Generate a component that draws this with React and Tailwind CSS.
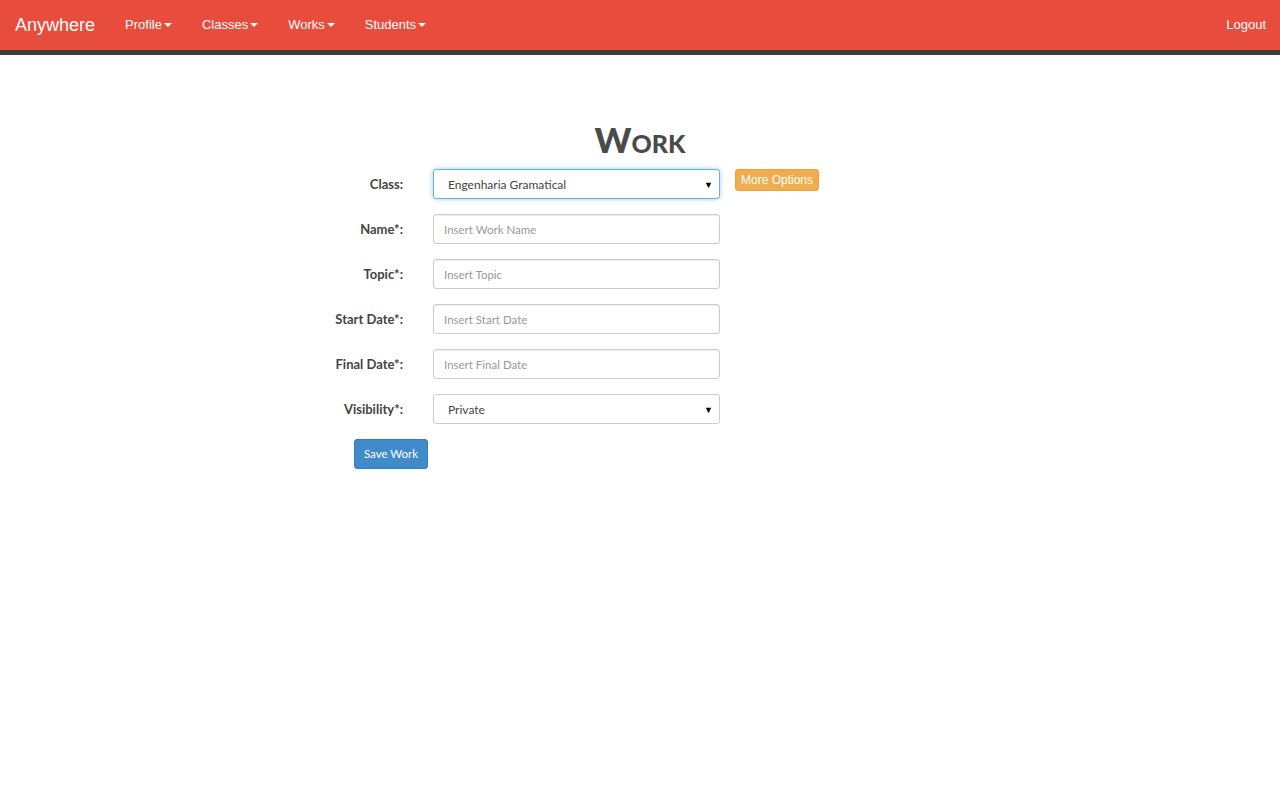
import React from 'react';

const navItems = ['Profile', 'Classes', 'Works', 'Students'];

const Caret = () => (
  <span className="ml-[2px] inline-block h-0 w-0 border-x-[4px] border-t-[4px] border-x-transparent border-t-white align-middle" />
);

const Navbar = () => (
  <div className="border-b-[5px] border-[#3d3d3d] bg-[#e74c3c] font-['Liberation_Sans',Arial,sans-serif] text-white">
    <div className="flex h-[50px] items-center">
      <a className="px-[15px] text-[18px]">Anywhere</a>
      <div className="flex">
        {navItems.map((item) => (
          <a key={item} className="flex items-center px-[15px] text-[13px]">
            {item}
            <Caret />
          </a>
        ))}
      </div>
      <a className="ml-auto pl-[15px] pr-[14px] text-[13px]">Logout</a>
    </div>
  </div>
);

const SelectBox = ({ value, focused }) => (
  <div
    className={
      'flex h-[30px] w-[287px] items-center justify-between rounded-[3px] border bg-white pl-[14px] pr-[6px] pt-[1px] text-[12px] text-[#444] ' +
      (focused ? 'border-[#66afe9] shadow-[0_0_5px_rgba(102,175,233,0.6)]' : 'border-[#ccc]')
    }
  >
    <span>{value}</span>
    <span className="text-[9px] text-black">▼</span>
  </div>
);

const TextBox = ({ placeholder }) => (
  <input
    placeholder={placeholder}
    className="h-[30px] w-[287px] rounded-[3px] border border-[#ccc] bg-white px-[10px] text-[11.5px] text-[#555] placeholder:text-[#999] shadow-[inset_0_1px_1px_rgba(0,0,0,0.075)] outline-none"
  />
);

const Row = ({ label, children }) => (
  <div className="flex items-center">
    <label className="w-[233px] pt-[1px] text-right text-[13px] font-bold text-[#444]">{label}</label>
    <div className="ml-[30px] flex items-start gap-[15px]">{children}</div>
  </div>
);

const App = () => (
  <div className="min-h-screen bg-white">
    <Navbar />
    <div className="font-['Lato','Open_Sans',sans-serif]">
      <h1 className="mt-[64px] text-center text-[35px] font-black leading-[40px] text-[#4a4a4a] [font-variant:small-caps]">
        Work
      </h1>
      <div className="mx-auto mt-[10px] flex w-[940px] flex-col gap-[15px]">
        <Row label="Class:">
          <SelectBox value="Engenharia Gramatical" focused />
          <button className="h-[22px] rounded-[3px] border border-[#eea236] bg-[#f0ad4e] px-[5px] font-['Liberation_Sans',Arial,sans-serif] text-[12px] text-white">
            More Options
          </button>
        </Row>
        <Row label="Name*:">
          <TextBox placeholder="Insert Work Name" />
        </Row>
        <Row label="Topic*:">
          <TextBox placeholder="Insert Topic" />
        </Row>
        <Row label="Start Date*:">
          <TextBox placeholder="Insert Start Date" />
        </Row>
        <Row label="Final Date*:">
          <TextBox placeholder="Insert Final Date" />
        </Row>
        <Row label="Visibility*:">
          <SelectBox value="Private" />
        </Row>
        <div className="ml-[184px]">
          <button className="h-[30px] w-[74px] rounded-[3px] border border-[#357ebd] bg-[#428bca] text-[11.5px] text-white">
            Save Work
          </button>
        </div>
      </div>
    </div>
  </div>
);

export default App;
